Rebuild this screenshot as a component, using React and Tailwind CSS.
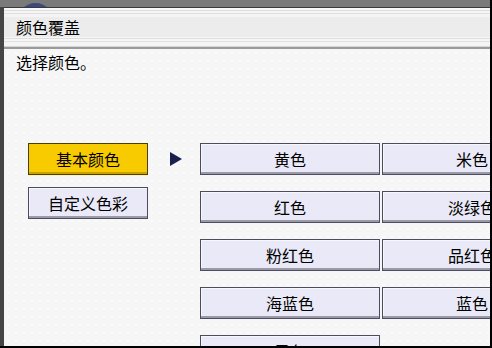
import React from "react";

const font = { fontFamily: '"Noto Sans CJK SC", "Noto Sans", sans-serif' };

function Btn({ children, w, yellow }) {
  const base =
    "shrink-0 h-[32px] flex items-center justify-center text-[16px] leading-none text-black border ";
  const cls = yellow
    ? "bg-[#f8cb00] border-[#4a3e10] shadow-[inset_0_-2px_0_#c9a100,0_1px_0_#fff2a0]"
    : "bg-[#e9e9f7] border-[#4c4c5c] shadow-[inset_0_-2px_0_#9a9aab,inset_1px_1px_0_#f6f6ff]";
  return (
    <div className={base + cls + " " + w}>
      <span className="pb-[1px]">{children}</span>
    </div>
  );
}

export default function App() {
  const col = [
    ["黄色", "米色"],
    ["红色", "淡绿色"],
    ["粉红色", "品红色"],
    ["海蓝色", "蓝色"],
    ["黑色", null],
  ];
  return (
    <div
      className="relative w-[492px] h-[348px] overflow-hidden bg-[#7a7a7a] border-r-2 border-b-2 border-black flex flex-col"
      style={font}
    >
      <div className="absolute left-[17px] top-[3px] w-[37px] h-[37px] rounded-full bg-[#3b4a7c]" />
      <div className="h-[7px] shrink-0" />
      <div className="flex flex-1 min-h-0 relative">
        <div className="w-[4px] shrink-0 bg-[#454545]" />
        <div className="flex-1 min-w-0 flex flex-col overflow-hidden border-t border-[#3a3a3a]">
          <div className="h-[39px] shrink-0 flex items-center pl-[12px] text-[16px] text-black bg-[linear-gradient(to_bottom,#f8f8f8_0px,#f8f8f8_2px,#dcdcdc_2px,#dcdcdc_3px,#f6f6f6_3px,#f6f6f6_5px,#e0e0e0_5px,#e0e0e0_6px,#f4f4f4_6px,#f4f4f4_9px,#ececec_9px,#ececec_29px,#f6f6f6_29px,#f6f6f6_30px,#dedede_30px,#dedede_31px,#f6f6f6_31px,#f6f6f6_33px,#e0e0e0_33px,#e0e0e0_34px,#f4f4f4_34px,#f4f4f4_38px,#d4d4d4_38px)]">
            <span className="mt-[-1px]">颜色覆盖</span>
          </div>
          <div className="h-[2px] shrink-0 bg-[#9a9a9a]" />
          <div className="flex-1 min-h-0 bg-[#f6f6f6] bg-[radial-gradient(#fbfbfb_1px,transparent_1px)] bg-[size:8px_8px] flex flex-col">
            <div className="pl-[12px] pt-[2px] text-[16px] leading-[22px] text-black">选择颜色。</div>
            <div className="flex items-start pl-[24px] mt-[70px]">
              <div className="flex flex-col gap-[12px] shrink-0">
                <Btn w="w-[120px]" yellow>
                  基本颜色
                </Btn>
                <Btn w="w-[120px]">自定义色彩</Btn>
              </div>
              <svg className="shrink-0 ml-[21px] mt-[9px]" width="14" height="14" viewBox="0 0 14 14">
                <path d="M1 0 L13 7 L1 14 Z" fill="#19204e" />
              </svg>
              <div className="shrink-0 ml-[17px] grid grid-cols-[180px_180px] gap-x-[2px] gap-y-[16px]">
                {col.flatMap(([a, b], i) => [
                  <Btn key={"a" + i} w="w-[180px]">
                    {a}
                  </Btn>,
                  b ? (
                    <Btn key={"b" + i} w="w-[180px]">
                      {b}
                    </Btn>
                  ) : (
                    <div key={"b" + i} />
                  ),
                ])}
              </div>
            </div>
          </div>
        </div>
      </div>
    </div>
  );
}
